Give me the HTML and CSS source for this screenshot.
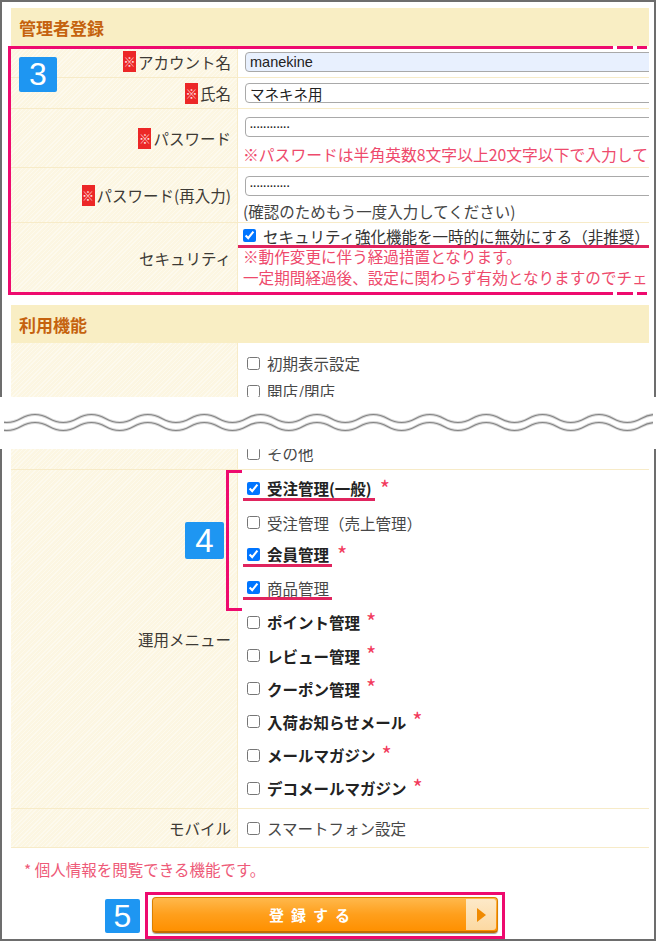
FILE: index.html
```html
<!DOCTYPE html>
<html lang="ja">
<head>
<meta charset="utf-8">
<title>管理者登録</title>
<link rel="stylesheet" href="styles.css">
</head>
<body>
<div class="frame">
  <section class="sec">
    <h2 class="sec-head">管理者登録</h2>
    <div class="tbl">
      <div class="row r-acc">
        <div class="lab"><span class="req">※</span>アカウント名</div>
        <div class="val mid"><input class="txt auto" type="text" value="manekine"></div>
      </div>
      <div class="row r-name">
        <div class="lab"><span class="req">※</span>氏名</div>
        <div class="val mid"><input class="txt" type="text" value="マネキネ用"></div>
      </div>
      <div class="row r-pw">
        <div class="lab"><span class="req">※</span>パスワード</div>
        <div class="val top">
          <input class="txt pw" type="text" value="············">
          <div class="hint">※パスワードは半角英数8文字以上20文字以下で入力して</div>
        </div>
      </div>
      <div class="row r-pw2">
        <div class="lab"><span class="req">※</span>パスワード(再入力)</div>
        <div class="val top">
          <input class="txt pw" type="text" value="············">
          <div class="sub">(確認のためもう一度入力してください)</div>
        </div>
      </div>
      <div class="row r-sec">
        <div class="lab">セキュリティ</div>
        <div class="val sec">
          <label class="secline"><input class="cb cb-sec" type="checkbox" checked>セキュリティ強化機能を一時的に無効にする（非推奨）</label>
          <div class="red-line">※動作変更に伴う経過措置となります。</div>
          <div class="red-line">一定期間経過後、設定に関わらず有効となりますのでチェ</div>
        </div>
      </div>
      <div class="hl-box"></div>
      <span class="badge b3">3</span>
    </div>
  </section>

  <section class="sec sec2">
    <h2 class="sec-head">利用機能</h2>
    <div class="row r-a">
      <div class="lab"></div>
      <div class="val list">
        <label class="item"><input class="cb" type="checkbox"><span class="n">初期表示設定</span></label>
        <label class="item"><input class="cb" type="checkbox"><span class="n">開店/閉店</span></label>
      </div>
    </div>
  </section>

  <div class="break">
    <svg class="wave" width="656" height="52" viewBox="0 0 656 52">
      <defs><clipPath id="wclip"><rect x="4" y="0" width="649" height="52"/></clipPath></defs>
      <g clip-path="url(#wclip)" fill="none" stroke-linecap="round">
        <path class="halo" d="M-7.3 21.5 Q6.8 29.5 20.9 21.5 T49.1 21.5 T77.3 21.5 T105.5 21.5 T133.7 21.5 T161.9 21.5 T190.1 21.5 T218.3 21.5 T246.5 21.5 T274.7 21.5 T302.9 21.5 T331.1 21.5 T359.3 21.5 T387.5 21.5 T415.7 21.5 T443.9 21.5 T472.1 21.5 T500.3 21.5 T528.5 21.5 T556.7 21.5 T584.9 21.5 T613.1 21.5 T641.3 21.5 T669.5 21.5"/>
        <path class="halo" d="M-7.3 29.5 Q6.8 37.5 20.9 29.5 T49.1 29.5 T77.3 29.5 T105.5 29.5 T133.7 29.5 T161.9 29.5 T190.1 29.5 T218.3 29.5 T246.5 29.5 T274.7 29.5 T302.9 29.5 T331.1 29.5 T359.3 29.5 T387.5 29.5 T415.7 29.5 T443.9 29.5 T472.1 29.5 T500.3 29.5 T528.5 29.5 T556.7 29.5 T584.9 29.5 T613.1 29.5 T641.3 29.5 T669.5 29.5"/>
        <path class="core" d="M-7.3 21.5 Q6.8 29.5 20.9 21.5 T49.1 21.5 T77.3 21.5 T105.5 21.5 T133.7 21.5 T161.9 21.5 T190.1 21.5 T218.3 21.5 T246.5 21.5 T274.7 21.5 T302.9 21.5 T331.1 21.5 T359.3 21.5 T387.5 21.5 T415.7 21.5 T443.9 21.5 T472.1 21.5 T500.3 21.5 T528.5 21.5 T556.7 21.5 T584.9 21.5 T613.1 21.5 T641.3 21.5 T669.5 21.5"/>
        <path class="core" d="M-7.3 29.5 Q6.8 37.5 20.9 29.5 T49.1 29.5 T77.3 29.5 T105.5 29.5 T133.7 29.5 T161.9 29.5 T190.1 29.5 T218.3 29.5 T246.5 29.5 T274.7 29.5 T302.9 29.5 T331.1 29.5 T359.3 29.5 T387.5 29.5 T415.7 29.5 T443.9 29.5 T472.1 29.5 T500.3 29.5 T528.5 29.5 T556.7 29.5 T584.9 29.5 T613.1 29.5 T641.3 29.5 T669.5 29.5"/>
      </g>
    </svg>
  </div>

  <div class="tbl">
    <div class="row r-b">
      <div class="lab"></div>
      <div class="val list">
        <div class="shift">
          <label class="item"><input class="cb" type="checkbox"><span class="n">その他</span></label>
        </div>
      </div>
    </div>
    <div class="row r-menu">
      <div class="lab">運用メニュー</div>
      <div class="val list menu">
        <div class="item m"><label class="mk"><input class="cb" type="checkbox" checked><b>受注管理(一般)</b></label><span class="ast">*</span></div>
        <div class="item m"><label class="plain"><input class="cb" type="checkbox"><span class="n">受注管理（売上管理）</span></label></div>
        <div class="item m"><label class="mk"><input class="cb" type="checkbox" checked><b>会員管理</b></label><span class="ast">*</span></div>
        <div class="item m"><label class="mk"><input class="cb" type="checkbox" checked><span class="n">商品管理</span></label></div>
        <div class="item m"><label class="plain"><input class="cb" type="checkbox"><b>ポイント管理</b></label><span class="ast">*</span></div>
        <div class="item m"><label class="plain"><input class="cb" type="checkbox"><b>レビュー管理</b></label><span class="ast">*</span></div>
        <div class="item m"><label class="plain"><input class="cb" type="checkbox"><b>クーポン管理</b></label><span class="ast">*</span></div>
        <div class="item m"><label class="plain"><input class="cb" type="checkbox"><b>入荷お知らせメール</b></label><span class="ast">*</span></div>
        <div class="item m"><label class="plain"><input class="cb" type="checkbox"><b>メールマガジン</b></label><span class="ast">*</span></div>
        <div class="item m"><label class="plain"><input class="cb" type="checkbox"><b>デコメールマガジン</b></label><span class="ast">*</span></div>
      </div>
      <div class="bracket"></div>
      <span class="badge b4">4</span>
    </div>
    <div class="row r-mob">
      <div class="lab">モバイル</div>
      <div class="val list mob">
        <label class="item"><input class="cb" type="checkbox"><span class="n">スマートフォン設定</span></label>
      </div>
    </div>
  </div>

  <p class="note">* 個人情報を閲覧できる機能です。</p>

  <div class="submit">
    <span class="badge b5">5</span>
    <span class="btn-frame">
      <button class="btn" type="button"><span class="btn-text">登録する</span><span class="btn-arrow"><span class="tri"></span></span></button>
    </span>
  </div>
</div>
</body>
</html>
```

FILE: styles.css
```css
* { box-sizing: border-box; }

body {
  margin: 0;
  background: #fff;
  font-family: "Noto Sans CJK JP", "Noto Sans", sans-serif;
  font-size: 15.5px;
  color: #3b3b3b;
}

.frame {
  width: 656px;
  border: 2px solid #6d6d6d;
  padding: 6px 5px 0 9px;
}

.sec-head {
  margin: 0;
  height: 38px;
  padding-left: 8px;
  display: flex;
  align-items: center;
  background: #f9eec4;
  color: #c5620e;
  font-size: 17px;
  font-weight: 700;
}

.tbl { position: relative; }

.row {
  display: grid;
  grid-template-columns: 226px 1fr;
  border-bottom: 1px solid #f7ebc8;
}

.lab {
  display: flex;
  align-items: center;
  justify-content: flex-end;
  padding-right: 6px;
  white-space: nowrap;
  color: #3d3a35;
  background-color: #fcf6e2;
  background-image: repeating-linear-gradient(-45deg, rgba(255,255,255,0.4) 0 1px, transparent 1px 3px);
}

.req {
  display: inline-block;
  width: 13px;
  height: 21px;
  margin-right: 2px;
  background: #ec2727;
  color: #ffe4e4;
  font-size: 12px;
  line-height: 21px;
  text-align: center;
}

.val {
  border-left: 1px solid #f7ebc8;
  padding-left: 5px;
  overflow: hidden;
  white-space: nowrap;
  background: #fff;
}

.val.mid { display: flex; align-items: center; }
.val.top { padding-top: 8px; }

.r-acc { height: 32px; }
.r-name { height: 31px; }
.r-pw { height: 59px; }
.r-pw2 { height: 55px; }
.r-sec { height: 70px; border-bottom: none; }

.txt {
  display: block;
  flex: none;
  width: 440px;
  height: 20px;
  margin: 0 0 0 2px;
  padding: 0 4px;
  border: 1px solid #a9a9a9;
  border-radius: 4px;
  background: #fff;
  color: #222;
  font-family: "Liberation Sans", "Noto Sans CJK JP", sans-serif;
  font-size: 14.5px;
}

.txt.auto { background: #e8f0fe; }
.txt.pw { font-size: 10px; color: #222; font-weight: 700; }

.hint {
  margin-top: 7px;
  line-height: 22px;
  color: #ee4a6c;
  font-size: 15.8px;
}

.sub {
  margin-top: 4px;
  line-height: 22px;
  color: #444;
}

.val.sec { padding-top: 3px; }

.secline {
  display: flex;
  align-items: center;
  height: 22px;
  margin: 0 0 -2px -6px;
  padding-left: 6px;
  border-bottom: 3px solid #e0245e;
  color: #333;
}

.cb {
  flex: none;
  width: 13px;
  height: 13px;
  margin: 0 7px 0 4px;
}

.cb-sec { margin-left: 0; }

.red-line {
  line-height: 21px;
  color: #ee4a6c;
  font-size: 15.6px;
}

/* highlight annotation around section 1 */
.hl-box {
  position: absolute;
  left: -3px;
  top: 0;
  width: 641px;
  height: 249px;
  border-left: 3px solid #ee0a6e;
  pointer-events: none;
  background-origin: border-box;
  background-image:
    linear-gradient(to right, #ee0a6e 0 605px, transparent 605px 609px, #ee0a6e 609px 625px, transparent 625px 629px, #ee0a6e 629px 639px, transparent 639px),
    linear-gradient(to right, #ee0a6e 0 605px, transparent 605px 609px, #ee0a6e 609px 625px, transparent 625px 629px, #ee0a6e 629px 639px, transparent 639px);
  background-size: 100% 3px, 100% 3px;
  background-position: left top, left bottom;
  background-repeat: no-repeat;
}

.badge {
  display: inline-block;
  background: #1e96f2;
  color: #fff;
  font-family: "Liberation Sans", sans-serif;
  text-align: center;
  border-radius: 2px;
}

.b3 {
  position: absolute;
  left: 8px;
  top: 11px;
  width: 38px;
  height: 35px;
  font-size: 32px;
  line-height: 35px;
}

.sec2 { margin-top: 12px; }

.r-a { height: 54px; border-bottom: none; }

.list { padding-top: 5px; }
.r-a .list { padding-top: 6px; }

.item {
  display: flex;
  align-items: center;
  height: 28px;
}

.n { color: #474747; }
.item b { color: #222; font-weight: 700; }

.break {
  height: 52px;
  margin: 0 -7px 0 -11px;
  background: #fff;
  position: relative;
}

.wave { display: block; }
.wave .halo { stroke: #d8d8d8; stroke-width: 3; }
.wave .core { stroke: #858585; stroke-width: 1.2; }

.r-b { height: 21px; }
.r-b .list { padding-top: 0; }
.shift { margin-top: -10px; }

.r-menu { height: 339px; position: relative; }
.menu { padding-top: 3px; }
.item.m { height: 33.2px; }

.mk, .plain {
  display: flex;
  align-items: center;
}

.mk {
  height: 22px;
  padding-right: 3px;
  border-bottom: 3px solid #e0245e;
}

.ast {
  margin-left: 5px;
  align-self: flex-start;
  margin-top: 3px;
  color: #f23a5c;
  font-size: 22px;
  line-height: 22px;
}

.plain + .ast { margin-left: 6px; }

.bracket {
  position: absolute;
  left: 215px;
  top: 0;
  width: 16px;
  height: 141px;
  border: 3px solid #ee0a6e;
  border-right: none;
  pointer-events: none;
}

.b4 {
  position: absolute;
  left: 174px;
  top: 52px;
  width: 39px;
  height: 37px;
  font-size: 33px;
  line-height: 37px;
}

.r-mob { height: 39px; }
.mob { display: flex; align-items: center; padding-top: 0; }

.note {
  margin: 10px 0 0;
  padding-left: 13px;
  line-height: 22px;
  color: #ee5a78;
}

.submit {
  display: flex;
  align-items: center;
  gap: 5px;
  margin-top: 12px;
  padding-left: 94px;
}

.b5 {
  width: 35px;
  height: 34px;
  font-size: 32px;
  line-height: 34px;
}

.btn-frame {
  display: block;
  border: 3px solid #ee0a6e;
  padding: 2px 4px 3px 4px;
}

.btn {
  display: flex;
  width: 346px;
  height: 36px;
  padding: 0;
  border: 1px solid #d98000;
  border-bottom: 2px solid #c46c00;
  border-radius: 4px;
  background: linear-gradient(#ffb84c, #ff9f1c 50%, #ff9000);
  box-shadow: 0 1px 1px #a0a0a0;
  font-family: "Noto Sans CJK JP", sans-serif;
  cursor: pointer;
}

.btn-text {
  flex: 1;
  display: flex;
  align-items: center;
  justify-content: center;
  padding-left: 7px;
  color: #fff;
  font-size: 15px;
  font-weight: 700;
  letter-spacing: 7px;
}

.btn-arrow {
  width: 30px;
  margin: 1px 1px 1px 0;
  display: flex;
  align-items: center;
  justify-content: center;
  background: linear-gradient(#fde9c8, #fcd9a2);
  border-radius: 0 3px 3px 0;
}

.tri {
  width: 0;
  height: 0;
  border-left: 9px solid #f08a00;
  border-top: 7px solid transparent;
  border-bottom: 7px solid transparent;
}
```
